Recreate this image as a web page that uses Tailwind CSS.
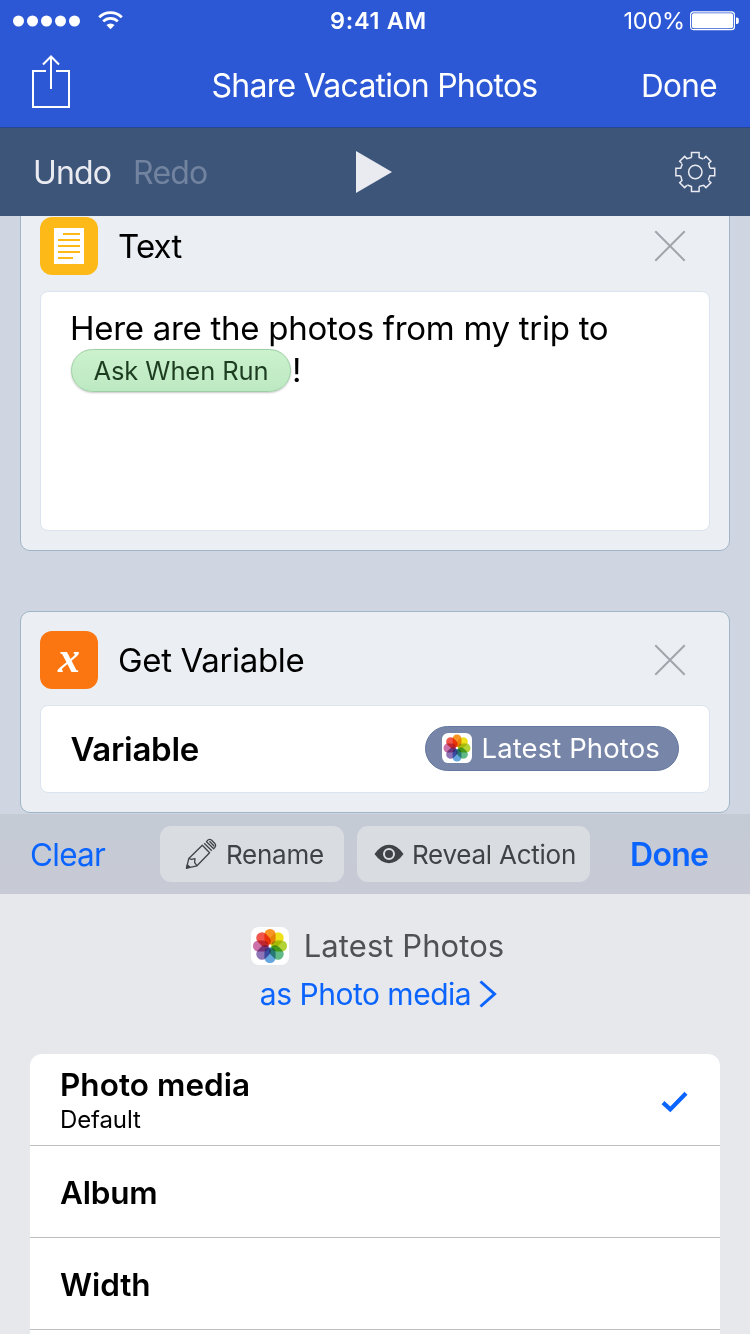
<!DOCTYPE html>
<html lang="en">
<head>
<meta charset="utf-8">
<title>Share Vacation Photos</title>
<script src="https://cdn.jsdelivr.net/npm/@tailwindcss/browser@4"></script>
</head>
<body class="w-[750px] h-[1334px] overflow-hidden flex flex-col bg-[#cfd6e1] font-['Inter','Liberation_Sans',sans-serif] text-black whitespace-nowrap">

<svg class="hidden">
  <defs>
    <symbol id="photos" viewBox="0 0 38 38">
      <rect width="38" height="38" rx="8" fill="#fff"/>
      <g transform="translate(19 19)" class="isolate">
        <rect class="mix-blend-multiply" x="-5.6" y="-17" width="11.2" height="15.6" rx="5.4" fill="#f79423"/>
        <rect class="mix-blend-multiply" x="-5.6" y="-17" width="11.2" height="15.6" rx="5.4" fill="#efe01c" transform="rotate(45)"/>
        <rect class="mix-blend-multiply" x="-5.6" y="-17" width="11.2" height="15.6" rx="5.4" fill="#b2d235" transform="rotate(90)"/>
        <rect class="mix-blend-multiply" x="-5.6" y="-17" width="11.2" height="15.6" rx="5.4" fill="#5fba87" transform="rotate(135)"/>
        <rect class="mix-blend-multiply" x="-5.6" y="-17" width="11.2" height="15.6" rx="5.4" fill="#66a5de" transform="rotate(180)"/>
        <rect class="mix-blend-multiply" x="-5.6" y="-17" width="11.2" height="15.6" rx="5.4" fill="#9074b8" transform="rotate(225)"/>
        <rect class="mix-blend-multiply" x="-5.6" y="-17" width="11.2" height="15.6" rx="5.4" fill="#cb70a8" transform="rotate(270)"/>
        <rect class="mix-blend-multiply" x="-5.6" y="-17" width="11.2" height="15.6" rx="5.4" fill="#f1554b" transform="rotate(315)"/>
      </g>
    </symbol>
    <path id="tooth" d="M-3.8-14.6V-19.4H3.8V-14.6L8-13"/>
    <path id="tooth-diagonal" d="M-3.5-15.4L-3.5-18.6H3.5V-15.4L7.6-13"/>
  </defs>
</svg>

<header class="h-[128px] shrink-0 bg-[#2c58d5] border-b border-[#29468f] text-white">
  <div class="h-[41px] grid grid-cols-3 items-center">
    <div class="flex items-center pl-[13px] gap-[18px]">
      <svg class="w-[68px] h-[12px]" viewBox="0 0 68 12" fill="#fff"><circle cx="5.5" cy="6" r="5.5"/><circle cx="19.5" cy="6" r="5.5"/><circle cx="33.5" cy="6" r="5.5"/><circle cx="47.5" cy="6" r="5.5"/><circle cx="61.5" cy="6" r="5.5"/></svg>
      <svg class="w-[25px] h-[19px] -ml-px" viewBox="0 0 25 19" fill="none" stroke="#fff" stroke-width="2.7"><path d="M1.2 6.3A16 16 0 0 1 23.8 6.3"/><path d="M5.2 10.4A10.3 10.3 0 0 1 19.8 10.4"/><path d="M8.4 14A6 6 0 0 1 16.6 14L12.5 18.2Z" fill="#fff" stroke="none"/></svg>
    </div>
    <div class="text-center text-[23.5px] font-semibold tracking-[0.7px] pl-[7px]">9:41 AM</div>
    <div class="flex items-center justify-end pr-[10px]">
      <span class="text-[23.5px] tracking-[-0.2px]">100%</span>
      <svg class="w-[50px] h-[20px] ml-[5px]" viewBox="0 0 50 20"><rect x=".6" y=".9" width="43.8" height="17.8" rx="3" fill="none" stroke="#fff" stroke-width="1.2"/><rect x="2" y="2.3" width="41" height="15" rx="1.8" fill="#fff"/><path d="M46 6.5h.8a2 2 0 0 1 2 2v2.6a2 2 0 0 1-2 2H46z" fill="#fff"/></svg>
    </div>
  </div>
  <div class="h-[86px] flex items-center justify-between pl-[30px] pr-[33px]">
    <svg class="w-[42px] h-[56px] -mt-[4px]" viewBox="0 0 42 56" fill="none" stroke="#fff" stroke-width="2"><path d="M16 17H3V53H39V17H26"/><path d="M21 35V3"/><path d="M13 10.5L21 2.5L29 10.5"/></svg>
    <h1 class="text-[32px] tracking-[-0.75px] ml-[36px] mt-[4px]">Share Vacation Photos</h1>
    <span class="text-[31.5px] tracking-[-0.65px] mt-[4px]">Done</span>
  </div>
</header>

<nav class="h-[88px] shrink-0 bg-[#3e557a] text-[#e9ebf1] grid grid-cols-3 items-center">
  <div class="flex pl-[33px] pt-[2px] gap-[22px] text-[32px]"><span class="tracking-[-0.85px]">Undo</span><span class="tracking-[-0.8px] text-[#71839f]">Redo</span></div>
  <svg class="w-[36px] h-[42px] justify-self-center mr-[2px]" viewBox="0 0 36 42"><path d="M0 0L36 21L0 42Z" fill="#e9ebf1"/></svg>
  <svg class="w-[42px] h-[42px] justify-self-end mr-[34px]" viewBox="-21.3 -21 42 42" fill="none" stroke="#e9ebf1" stroke-width="1.5">
    <use href="#tooth"/><use href="#tooth-diagonal" transform="rotate(45)"/><use href="#tooth" transform="rotate(90)"/><use href="#tooth-diagonal" transform="rotate(135)"/><use href="#tooth" transform="rotate(180)"/><use href="#tooth-diagonal" transform="rotate(225)"/><use href="#tooth" transform="rotate(270)"/><use href="#tooth-diagonal" transform="rotate(315)"/>
    <circle r="6.7"/>
  </svg>
</nav>

<main class="h-[598px] shrink-0 overflow-hidden px-[20px]">
  <section class="-mt-[19px] h-[354px] rounded-[10px] border border-[#9fb4c7] bg-[#ebeff4] px-[19px] pt-[19px]">
    <div class="h-[58px] flex items-center">
      <svg class="w-[58px] h-[58px]" viewBox="0 0 58 58"><rect width="58" height="58" rx="12" fill="#fdb917"/><rect x="14" y="11" width="30" height="36" fill="#fff"/><path d="M23 17H40M18 23H40M18 29H40M18 35H40M18 41H33" stroke="#fdb917" stroke-width="2"/></svg>
      <h2 class="text-[33px] tracking-[-0.8px] ml-[20px] mt-[2px]">Text</h2>
      <svg class="w-[32px] h-[32px] ml-auto mr-[24px]" viewBox="0 0 32 32"><path d="M1.3 1.3L30.7 30.7M30.7 1.3L1.3 30.7" stroke="#a1a5ab" stroke-width="2"/></svg>
    </div>
    <div class="mt-[16px] h-[240px] rounded-[8px] border border-[#dbe4ee] bg-white pl-[30px] pt-[16px]">
      <p class="h-[41px] flex items-center text-[33px] tracking-[-0.28px] -ml-[1px]">Here are the photos from my trip to</p>
      <div class="flex items-center h-[43px]">
        <span class="w-[220px] h-[43px] rounded-full border border-[#9dcfa4] bg-linear-to-b from-[#cbf2cd] to-[#bde9c2] shadow-[0_1px_2px_rgba(0,0,0,0.22)] flex items-center justify-center pt-[2px] text-[25.5px] tracking-[-0.09px] text-[#1d3d20]">Ask When Run</span>
        <span class="text-[33px] ml-px">!</span>
      </div>
    </div>
  </section>

  <section class="mt-[60px] h-[202px] rounded-[10px] border border-[#9fb4c7] bg-[#ebeff4] px-[19px] pt-[19px]">
    <div class="h-[58px] flex items-center">
      <div class="w-[58px] h-[58px] rounded-[12px] bg-[#fb7611] text-white flex items-center justify-center font-['Liberation_Serif',serif] italic font-bold text-[44px] leading-none pb-[5px]">x</div>
      <h2 class="text-[33px] tracking-[-0.34px] ml-[20px] mt-[2px]">Get Variable</h2>
      <svg class="w-[32px] h-[32px] ml-auto mr-[24px]" viewBox="0 0 32 32"><path d="M1.3 1.3L30.7 30.7M30.7 1.3L1.3 30.7" stroke="#a1a5ab" stroke-width="2"/></svg>
    </div>
    <div class="mt-[16px] h-[88px] rounded-[8px] border border-[#dbe4ee] bg-white pl-[30px] pr-[30px] pb-[2px] flex items-center justify-between">
      <span class="text-[33px] font-semibold tracking-[-0.3px] mt-[4px] -ml-[0.5px]">Variable</span>
      <span class="w-[254px] h-[45px] rounded-full border border-[#65779e] bg-[#7685a8] text-white flex items-center pl-[16px]">
        <svg class="w-[30px] h-[30px]"><use href="#photos"/></svg>
        <span class="text-[27.5px] tracking-[0.1px] ml-[9.5px] mt-[2px]">Latest Photos</span>
      </span>
    </div>
  </section>
</main>

<div class="h-[80px] shrink-0 bg-linear-to-b from-[#c4cbd4] to-[#c8cad5] flex items-center text-[#404346]">
  <span class="w-[160px] pl-[30px] pt-px text-[31.5px] tracking-[-0.75px] text-[#0b64fe]">Clear</span>
  <div class="w-[184px] h-[56px] rounded-[11px] bg-[#d9dce1] flex items-center pl-[25px]">
    <svg class="w-[32px] h-[32px]" viewBox="0 0 32 32" fill="none" stroke="#404346" stroke-width="1.3" stroke-linejoin="round"><path d="M1.5 30.2L3.8 20.5L17.3 7.2L24.6 14.8L12 27.8Z"/><path d="M3.8 20.5L6.5 21.3L10 20.6L9.6 24.4L12 27.8"/><path d="M1.5 30.2L2.3 26.8L4.9 29.2Z" fill="#404346"/><path d="M19.2 5.2L26.8 12.8"/><path d="M21.5 3.7Q23.5 .3 26.5 2L29.6 5.2Q32 8 28.7 10.7Z"/><path d="M24.5 3.2L29.3 8.2"/></svg>
    <span class="text-[26px] tracking-[-0.25px] ml-[9px]">Rename</span>
  </div>
  <div class="w-[233px] ml-[13px] h-[56px] rounded-[11px] bg-[#d9dce1] flex items-center pl-[17px]">
    <svg class="w-[30px] h-[20px]" viewBox="0 0 30 20"><path d="M.5 10Q7 .8 15 .8T29.5 10Q23 19.2 15 19.2T.5 10Z" fill="#404346"/><circle cx="15" cy="10" r="5" fill="#404346" stroke="#d9dce1" stroke-width="2"/></svg>
    <span class="text-[26px] tracking-[-0.25px] ml-[8px]">Reveal Action</span>
  </div>
  <span class="ml-[40px] pt-px text-[32px] font-semibold tracking-[-0.72px] text-[#0b64fe]">Done</span>
</div>

<div class="grow bg-[#e6e8ec] px-[30px] flex flex-col">
  <div class="h-[160px] shrink-0 pt-[32px] flex flex-col items-center">
    <div class="h-[40px] ml-[5px] flex items-center text-[31px] tracking-[0.07px] text-[#505154]">
      <svg class="w-[38px] h-[38px] mr-[15px]"><use href="#photos"/></svg>Latest Photos
    </div>
    <div class="h-[40px] mt-[8px] ml-[7px] flex items-center text-[30px] tracking-[-0.49px] text-[#0b64fe]"><span class="pt-px">as Photo media</span>
      <svg class="w-[18px] h-[28px] ml-[8px]" viewBox="0 0 18 28" fill="none" stroke="#0b64fe" stroke-width="3"><path d="M1.5 1.5L15.5 14L1.5 26.5"/></svg>
    </div>
  </div>
  <ul class="h-[280px] shrink-0 rounded-t-[12px] bg-white text-[31.5px] font-semibold overflow-hidden">
    <li class="h-[92px] border-b border-[#bdbec0] flex items-center justify-between pl-[30px] pr-[32px]">
      <div class="flex flex-col pt-[2px]"><span class="h-[38px] leading-[38px] tracking-[0.05px]">Photo media</span><span class="h-[32px] leading-[32px] text-[24px] font-normal tracking-[-0.11px]">Default</span></div>
      <svg class="w-[27px] h-[22px] mt-[5px]" viewBox="0 0 27 22" fill="none" stroke="#0b64fe" stroke-width="4.2"><path d="M2 11.6L9.3 18.4L25 2.2"/></svg>
    </li>
    <li class="h-[92px] border-b border-[#bdbec0] flex items-center pl-[30px] pt-[2px] tracking-[-0.2px]">Album</li>
    <li class="h-[92px] border-b border-[#bdbec0] flex items-center pl-[30px] pt-[2px] tracking-[-0.1px]">Width</li>
  </ul>
</div>
</body>
</html>
